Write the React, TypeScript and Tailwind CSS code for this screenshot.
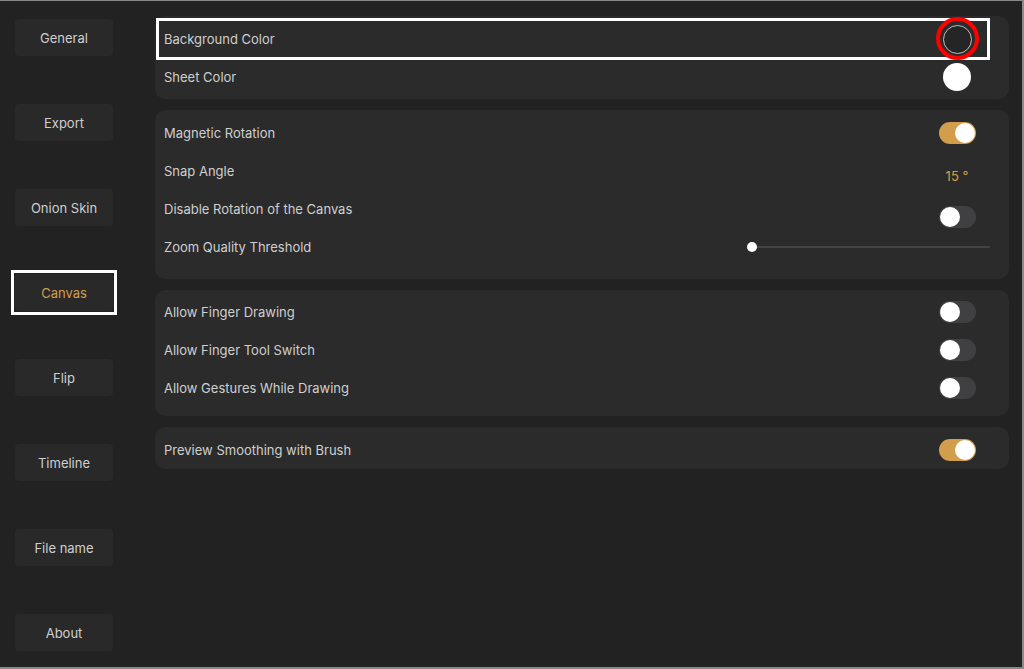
import React from "react";

const font = { fontFamily: "Inter, 'Noto Sans', sans-serif" };

function Toggle({ on }: { on: boolean }) {
  return (
    <div
      className={`relative h-[22px] w-[37px] rounded-full ${on ? "bg-[#d39e4c]" : "bg-[#404042]"}`}
    >
      <div
        className={`absolute top-[1px] h-[20px] w-[20px] rounded-full bg-white ${on ? "right-[1px]" : "left-[1px]"}`}
      />
    </div>
  );
}

function Row({ label, children }: { label: string; children?: React.ReactNode }) {
  return (
    <div className="flex h-[38px] items-center justify-between pl-[9px] pr-[32px]">
      <span className="pt-[1px] text-[13px] text-[#cfcfcf]">{label}</span>
      <div className="flex w-[40px] items-center justify-center">{children}</div>
    </div>
  );
}

const navItems = ["General", "Export", "Onion Skin", "Canvas", "Flip", "Timeline", "File name", "About"];

export default function App() {
  return (
    <div
      style={font}
      className="box-border flex h-[669px] w-[1024px] overflow-hidden border-t border-r-2 border-b-2 border-[#8a8a8a] bg-[#222222]"
    >
      <div className="flex w-[155px] shrink-0 flex-col gap-[48px] pl-[15px] pt-[18px]">
        {navItems.map((n) => (
          <div key={n} className="relative h-[37px] w-[98px]">
            <div
              className={`flex h-full w-full items-center justify-center rounded-[4px] bg-[#292929] pt-[2px] text-[13px] ${n === "Canvas" ? "text-[#d39e4c]" : "text-[#cfcfcf]"}`}
            >
              {n}
            </div>
            {n === "Canvas" && (
              <div className="absolute -left-[4px] -right-[4px] -top-[4px] -bottom-[4px] border-[3px] border-white" />
            )}
          </div>
        ))}
      </div>

      <div className="flex w-[854px] flex-col gap-[11px] pt-[15px]">
        <div className="relative rounded-[10px] bg-[#2b2b2b] pb-[3px] pt-[4px]">
          <Row label="Background Color">
            <div className="h-[29px] w-[29px] rounded-full border border-[#bdbdbd] bg-[#252525]" />
          </Row>
          <Row label="Sheet Color">
            <div className="h-[28px] w-[28px] rounded-full bg-white" />
          </Row>
          <div className="absolute left-[1px] top-[2px] h-[42px] w-[834px] border-[3px] border-white" />
          <div className="absolute left-[781px] top-[1px] h-[43px] w-[43px] rounded-full border-[4px] border-[#ff0000]" />
        </div>

        <div className="rounded-[10px] bg-[#2b2b2b] pb-[13px] pt-[4px]">
          <Row label="Magnetic Rotation">
            <Toggle on />
          </Row>
          <Row label="Snap Angle">
            <span className="mt-[12px] whitespace-nowrap text-[13px] text-[#d39e4c]">15 °</span>
          </Row>
          <Row label="Disable Rotation of the Canvas">
            <div className="mt-[16px]">
              <Toggle on={false} />
            </div>
          </Row>
          <div className="flex h-[38px] items-center justify-between pl-[9px] pr-[19px]">
            <span className="pt-[1px] text-[13px] text-[#cfcfcf]">Zoom Quality Threshold</span>
            <div className="relative flex h-[10px] w-[243px] items-center">
              <div className="ml-[5px] h-[2px] flex-1 rounded-full bg-[#444446]" />
              <div className="absolute left-0 top-0 h-[10px] w-[10px] rounded-full bg-white" />
            </div>
          </div>
        </div>

        <div className="rounded-[10px] bg-[#2b2b2b] pb-[9px] pt-[3px]">
          <Row label="Allow Finger Drawing">
            <Toggle on={false} />
          </Row>
          <Row label="Allow Finger Tool Switch">
            <Toggle on={false} />
          </Row>
          <Row label="Allow Gestures While Drawing">
            <Toggle on={false} />
          </Row>
        </div>

        <div className="rounded-[10px] bg-[#2b2b2b] pt-[4px]">
          <Row label="Preview Smoothing with Brush">
            <Toggle on />
          </Row>
        </div>
      </div>
    </div>
  );
}
